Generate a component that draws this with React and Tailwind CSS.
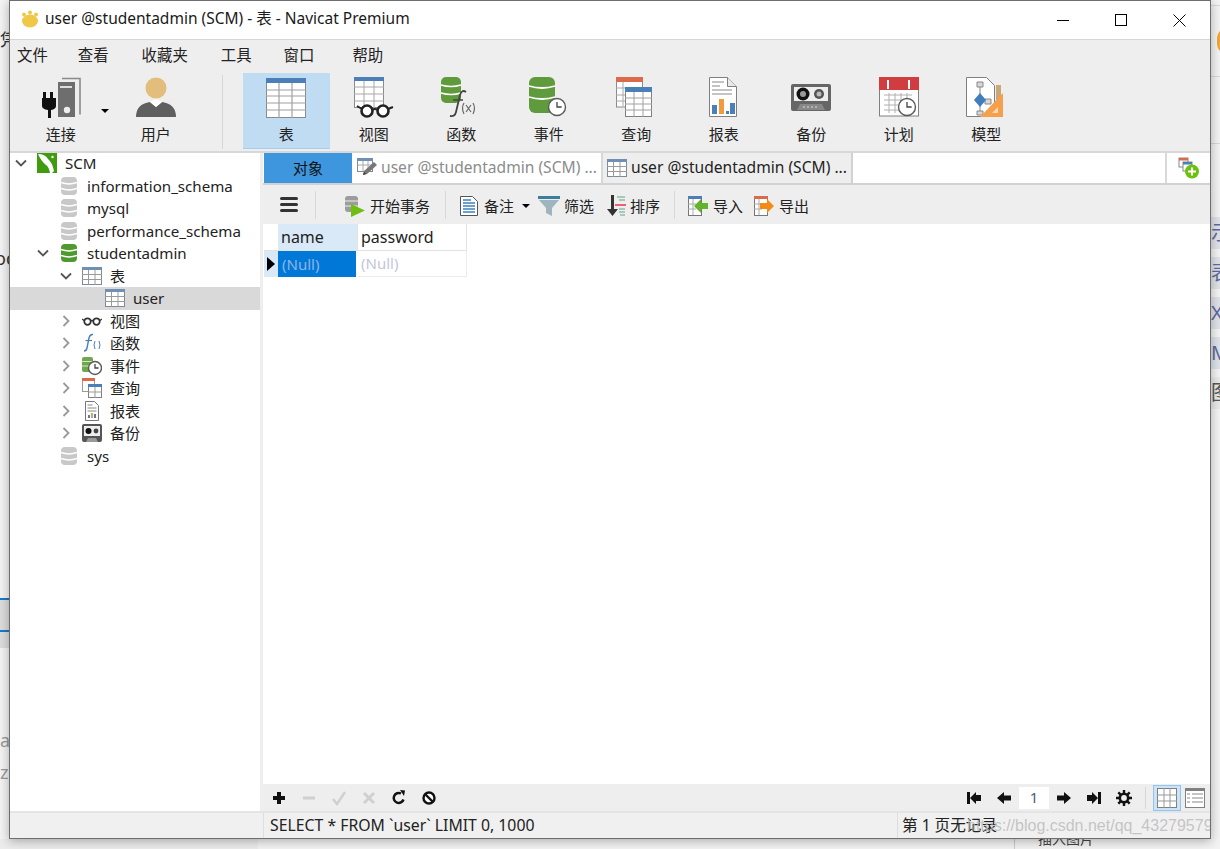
const cjk = "font-['Noto_Sans','Noto_Sans_CJK_SC',sans-serif]";

function TableIcon({ size = 40, head = "#4a7fb8", line = "#8a8a8a" }) {
  return (
    <svg width={size} height={size} viewBox="0 0 40 40">
      <rect x="0.5" y="0.5" width="39" height="39" fill="#fff" stroke={line} />
      <rect x="0" y="0" width="40" height="5" fill={head} />
      {[12, 18, 25, 32].map((y) => (
        <line key={y} x1="0" x2="40" y1={y} y2={y} stroke="#a0a0a0" strokeWidth="1.2" />
      ))}
      <line x1="13" x2="13" y1="5" y2="40" stroke="#a0a0a0" strokeWidth="1.2" />
      <line x1="26" x2="26" y1="5" y2="40" stroke="#a0a0a0" strokeWidth="1.2" />
    </svg>
  );
}

function SmallTable({ muted = "#6f8fb3" }) {
  return (
    <svg width="20" height="20" viewBox="0 0 20 20">
      <rect x="0.5" y="1.5" width="19" height="17" fill="#fff" stroke="#808a94" />
      <rect x="0" y="1" width="20" height="3" fill={muted} />
      <path d="M0 8.5h20M0 13.5h20M6.5 4v15M13 4v15" stroke="#9a9a9a" fill="none" />
    </svg>
  );
}

function Glasses({ w = 20, color = "#333" }) {
  return (
    <svg width={w} height={w * 0.5} viewBox="0 0 40 20">
      <circle cx="11" cy="11" r="6.5" fill="#fff" stroke={color} strokeWidth="3.5" />
      <circle cx="29" cy="11" r="6.5" fill="#fff" stroke={color} strokeWidth="3.5" />
      <path d="M17 10q3-2 6 0M4 9L0 6M36 9l4-3" stroke={color} strokeWidth="2.5" fill="none" />
    </svg>
  );
}

function Db({ w = 16, h = 20, color = "#c8c8c8" }) {
  return (
    <svg width={w} height={h} viewBox="0 0 16 20">
      <rect x="0" y="1" width="16" height="18" rx="4" fill={color} />
      <path d="M0 6.5q8 3 16 0M0 12.5q8 3 16 0" stroke="#fff" strokeWidth="1.4" fill="none" />
    </svg>
  );
}

function Clock({ cx, cy, r }) {
  return (
    <g>
      <circle cx={cx} cy={cy} r={r} fill="#fff" stroke="#5a5a5a" strokeWidth="1.4" />
      <path d={`M${cx} ${cy - r * 0.6}V${cy}H${cx + r * 0.55}`} stroke="#444" strokeWidth="1.3" fill="none" />
    </g>
  );
}

function ConnectIcon() {
  return (
    <svg width="42" height="42" viewBox="0 0 42 42">
      <path d="M22 1.500h18v36" stroke="#8a8a8a" strokeWidth="1.6" fill="none" />
      <rect x="18" y="5" width="17" height="35" fill="#6e6e6e" />
      <rect x="20" y="9" width="12" height="2" fill="#ddd" />
      <circle cx="27" cy="33" r="3.200" fill="#eee" />
      <path d="M3 15h3v6h4v-6h3v6h3v8q0 3-5 4v8H8v-8q-6-1-6-4v-8h1z" fill="#111" />
    </svg>
  );
}

function UserIcon() {
  return (
    <svg width="42" height="42" viewBox="0 0 42 42">
      <path d="M1 40q0-13 14-15l6 5 6-5q14 2 14 15z" fill="#5f5f5f" />
      <path d="M15 25l6 5 6-5-6-3z" fill="#fff" />
      <circle cx="21" cy="11" r="10.5" fill="#e3bd7c" />
    </svg>
  );
}

function ViewIcon() {
  return (
    <svg width="42" height="42" viewBox="0 0 42 42">
      <rect x="1.5" y="0.5" width="29" height="30" fill="#fff" stroke="#8a8a8a" />
      <rect x="1" y="0" width="30" height="4" fill="#4a7fb8" />
      <path d="M1 10h30M1 17h30M1 24h30M11 4v27M21 4v27" stroke="#a8a8a8" fill="none" />
      <g transform="translate(3 25)">
        <circle cx="11" cy="9" r="5.5" fill="#fff" stroke="#222" strokeWidth="2.6" />
        <circle cx="27" cy="9" r="5.5" fill="#fff" stroke="#222" strokeWidth="2.6" />
        <path d="M16 8q3-2 6 0M6 7L1 4M32 7l5-2" stroke="#222" strokeWidth="2" fill="none" />
      </g>
    </svg>
  );
}

function FuncIcon() {
  return (
    <svg width="42" height="42" viewBox="0 0 42 42">
      <rect x="1" y="0" width="20" height="26" rx="5" fill="#5f9b3c" />
      <path d="M1 8q10 3 20 0M1 16q10 3 20 0" stroke="#fff" strokeWidth="1.5" fill="none" />
      <path d="M26 15q-4-3-6 3l-4 17q-1 5-6 4" stroke="#444" strokeWidth="1.800" fill="none" />
      <path d="M13 23h10" stroke="#444" strokeWidth="1.500" />
      <path d="M24 26q-3 5 0 11M33 26q3 5 0 11M26 28l5 7M31 28l-5 7" stroke="#666" strokeWidth="1.200" fill="none" />
    </svg>
  );
}

function EventIcon() {
  return (
    <svg width="42" height="42" viewBox="0 0 42 42">
      <rect x="1" y="0" width="26" height="36" rx="6" fill="#5f9b3c" />
      <path d="M1 9q13 4 26 0M1 20q13 4 26 0" stroke="#fff" strokeWidth="1.8" fill="none" />
      <Clock cx={29} cy={30} r={8.5} />
    </svg>
  );
}

function QueryIcon() {
  return (
    <svg width="42" height="42" viewBox="0 0 42 42">
      <rect x="1.5" y="1" width="26" height="29" fill="#fff" stroke="#8a8a8a" />
      <rect x="1" y="0" width="27" height="5" fill="#dc6a4a" />
      <path d="M1 11h12M1 18h12M1 24h12M8 5v24" stroke="#a8a8a8" fill="none" />
      <rect x="10.5" y="10.5" width="26" height="29" fill="#fff" stroke="#808080" />
      <rect x="10" y="10" width="27" height="5" fill="#4a7fb8" />
      <path d="M10 21h27M10 27h27M10 33h27M19 15v25M28 15v25" stroke="#a0a0a0" fill="none" />
    </svg>
  );
}

function ReportIcon() {
  return (
    <svg width="42" height="42" viewBox="0 0 42 42">
      <path d="M6.5 0.5h18l9 9v30h-27z" fill="#fff" stroke="#808080" />
      <path d="M24.5 0.5v9h9" fill="#e8e8e8" stroke="#808080" />
      <path d="M9 5h12M9 9h8M9 13h20M9 17h20" stroke="#888" fill="none" />
      <rect x="9" y="28" width="5" height="9" fill="#4a7fb8" />
      <rect x="16" y="22" width="5" height="15" fill="#f29a3f" />
      <rect x="23" y="34" width="3" height="3" fill="#4a7fb8" />
      <rect x="27" y="26" width="5" height="11" fill="#4a7fb8" />
    </svg>
  );
}

function TapeIcon({ size = 42 }) {
  return (
    <svg width={size} height={size} viewBox="0 0 42 42">
      <rect x="1" y="7" width="40" height="27" rx="2" fill="#666" />
      <rect x="4" y="10" width="34" height="14" fill="#eee" />
      <circle cx="13" cy="17" r="6.5" fill="#111" />
      <circle cx="13" cy="17" r="3" fill="#999" />
      <circle cx="29" cy="17" r="5" fill="#555" />
      <circle cx="29" cy="17" r="2.5" fill="#bbb" />
      <path d="M7 33l3-6h22l3 6z" fill="#888" />
      <path d="M13 30h16" stroke="#ddd" strokeDasharray="2 2" />
    </svg>
  );
}

function PlanIcon() {
  return (
    <svg width="42" height="42" viewBox="0 0 42 42">
      <rect x="1.5" y="1" width="39" height="38" fill="#fff" stroke="#808080" />
      <rect x="1" y="0" width="40" height="13" fill="#d13c40" />
      <rect x="9" y="3" width="2" height="9" fill="#fff" />
      <rect x="30" y="3" width="2" height="9" fill="#fff" />
      <path d="M6 18h28M6 23h28M6 28h28M6 33h28M11 16v20M17 16v20M23 16v20M29 16v20" stroke="#b0b0b0" fill="none" />
      <Clock cx={29} cy={30} r={8.5} />
    </svg>
  );
}

function ModelIcon() {
  return (
    <svg width="42" height="42" viewBox="0 0 42 42">
      <path d="M1.5 0.5h20l8 8v31h-28z" fill="#fff" stroke="#808080" />
      <path d="M12 5h6v5h-6zM20 22h6v5h-6zM12 34h6v4h-6zM15 10v24" stroke="#888" fill="#d8d8d8" />
      <path d="M15 16l6 7-6 7-6-7z" fill="#3f7fc0" />
      <rect x="31" y="8" width="5" height="22" fill="#c9a777" />
      <path d="M38 16v24H15z" fill="#f5a04d" />
      <path d="M33 30v6h-6z" fill="#fff" opacity="0.6" />
    </svg>
  );
}

function ToolItem({ label, active, children }) {
  return (
    <div className={`w-[87.5px] h-[76px] flex flex-col items-center ${active ? "bg-[#bfdcf3] border-b border-[#a8cdea]" : ""}`}>
      <div className="h-[42px] mt-[4px] flex items-center justify-center">{children}</div>
      <div className="mt-[4px] text-[15px] leading-[22px] text-[#222]">{label}</div>
    </div>
  );
}

function Sep({ className = "" }) {
  return <div className={`w-px bg-[#d8d8d8] ${className}`} />;
}

function Chevron({ open, light }) {
  return (
    <svg width="16" height="16" viewBox="0 0 16 16">
      {open ? (
        <path d="M3 5.5l5 5 5-5" stroke="#555" strokeWidth="1.8" fill="none" />
      ) : (
        <path d="M5.5 3l5 5-5 5" stroke={light ? "#999" : "#555"} strokeWidth="1.8" fill="none" />
      )}
    </svg>
  );
}

function TreeRow({ pl, chevron, icon, text, selected }) {
  return (
    <div className={`h-[22.5px] flex items-center gap-2 ${pl} ${selected ? "bg-[#d9d9d9]" : ""}`}>
      <div className="w-4 h-4 shrink-0">
        {chevron ? <Chevron open={chevron === "open"} light={chevron === "closed"} /> : null}
      </div>
      <div className="w-5 h-5 shrink-0 flex items-center justify-center">{icon}</div>
      <span className="text-[15.1px] leading-[22px] text-[#222]">{text}</span>
    </div>
  );
}

function Dolphin() {
  return (
    <svg width="20" height="20" viewBox="0 0 20 20">
      <rect width="20" height="20" fill="#3f9c0f" />
      <path d="M1 1q7 0 10 5 4 3 6 12-1 1-2 2h-2q-1-6-4-8Q4 8 1 1z" fill="#fff" />
      <circle cx="15.5" cy="4" r="1.2" fill="#fff" />
    </svg>
  );
}

function SideIcon({ kind }) {
  if (kind === "func") {
    return (
      <svg width="20" height="20" viewBox="0 0 20 20">
        <path d="M11 1.5Q8 1 7 5L5 15q-.6 3-3 3" stroke="#4a7fb8" strokeWidth="1.4" fill="none" />
        <path d="M3.5 7.5H10" stroke="#4a7fb8" strokeWidth="1.2" />
        <path d="M13 8q-2 4 0 8M17 8q2 4 0 8" stroke="#4a7fb8" strokeWidth="1" fill="none" />
      </svg>
    );
  }
  if (kind === "event") {
    return (
      <svg width="20" height="20" viewBox="0 0 20 20">
        <rect x="0" y="1" width="11" height="15" rx="2" fill="#6ea84a" />
        <path d="M0 5.5h11M0 10h11" stroke="#d7e8c8" />
        <Clock cx={13} cy={12} r={6.5} />
      </svg>
    );
  }
  if (kind === "query") {
    return (
      <svg width="20" height="20" viewBox="0 0 20 20">
        <rect x="0.5" y="0.5" width="12" height="13" fill="#fff" stroke="#999" />
        <rect x="0" y="0" width="13" height="3" fill="#dc6a4a" />
        <rect x="6.5" y="6.5" width="13" height="13" fill="#fff" stroke="#808080" />
        <rect x="6" y="6" width="14" height="3" fill="#4a7fb8" />
        <path d="M6 14h14M13 9v11" stroke="#999" />
      </svg>
    );
  }
  if (kind === "report") {
    return (
      <svg width="20" height="20" viewBox="0 0 20 20">
        <path d="M3.5 .5h9l4 4v15h-13z" fill="#fff" stroke="#777" />
        <path d="M5.5 4h5M5.5 7h9M5.5 10h9" stroke="#888" />
        <rect x="6" y="14" width="2" height="3" fill="#4a7fb8" />
        <rect x="9" y="12" width="2" height="5" fill="#f29a3f" />
        <rect x="12" y="13" width="2" height="4" fill="#4a7fb8" />
      </svg>
    );
  }
  return (
    <svg width="20" height="20" viewBox="0 0 20 20">
      <rect x="0" y="1" width="20" height="18" rx="2" fill="#555" />
      <rect x="2" y="3" width="16" height="10" fill="#eee" />
      <circle cx="6.5" cy="8" r="3" fill="#111" />
      <circle cx="14" cy="8" r="2.4" fill="#444" />
      <path d="M4 19l2-4h8l2 4z" fill="#999" />
    </svg>
  );
}

function GridHeadCell({ w, bg, children }) {
  return (
    <div className={`${w} h-[27px] pl-[3px] flex items-center text-[16px] text-[#222] border-r border-b border-[#e2e2e2] ${bg}`}>
      {children}
    </div>
  );
}

function NavIcon({ d }) {
  return (
    <svg width="16" height="16" viewBox="0 0 16 16">
      <path d={d} fill="#111" />
    </svg>
  );
}

function SmallAction({ children, label }) {
  return (
    <button type="button" aria-label={label} className="w-[30px] h-5 flex items-center justify-center">
      {children}
    </button>
  );
}

const toolbarText = "text-[15px] leading-[22px] text-[#222]";

export default function App() {
  return (
    <div className={`relative w-[1220px] h-[849px] overflow-hidden bg-[#f3f3f3] ${cjk}`}>
      {/* what shows of the page behind the window */}
      <div className="absolute left-0 top-[30px] text-[17px] leading-[20px] text-[#333]">凭</div>
      <div className="absolute left-[-5px] top-[248px] text-[18px] leading-[20px] text-[#333]">od</div>
      <div className="absolute left-0 top-[598px] w-[10px] h-[50px] border-t-2 border-[#1a78c9] bg-[#dcdcdc]" />
      <div className="absolute left-0 top-[630px] w-[10px] h-[2px] bg-[#1a78c9]" />
      <div className="absolute left-0 top-[728px] text-[18px] leading-[24px] text-[#999]">a</div>
      <div className="absolute left-0 top-[760px] text-[18px] leading-[24px] text-[#999]">z</div>
      <div className="absolute left-0 top-[839px] w-[258px] h-[10px] bg-[#ececec]" />
      <div className="absolute left-[1014px] top-[839px] w-px h-[10px] bg-[#ccc]" />
      <div className="absolute left-[1038px] top-[829px] text-[14px] leading-[20px] text-[#444]">插入图片</div>
      <div className="absolute left-[1217px] top-[28px] w-[20px] h-[26px] rounded-full bg-[#f0a63a]" />
      <div className="absolute left-[1211px] top-[5px] w-[9px] h-px bg-[#d8d8d8]" />
      <div className="absolute left-[1211px] top-[76px] w-[9px] h-px bg-[#d8d8d8]" />
      <div className="absolute left-[1211px] top-[143px] w-[9px] h-px bg-[#d8d8d8]" />
      <div className="absolute left-[1211px] top-[217px] w-[9px] flex flex-col overflow-hidden text-[20px] leading-[32px] text-[#5f6a9c]">
        <span className="block w-[24px] h-[32px] mb-[8px] bg-[#dfe2e8]">示</span>
        <span className="block w-[24px] h-[32px] mb-[8px] bg-[#dfe2e8]">表</span>
        <span className="block w-[24px] h-[32px] mb-[8px] bg-[#dfe2e8]">X</span>
        <span className="block w-[24px] h-[32px] mb-[8px] bg-[#dfe2e8]">M</span>
        <span className="block w-[24px] h-[32px] bg-[#e9e9e9] text-[#555]">图</span>
      </div>

      <div className="relative ml-[9px] w-[1202px] h-[839px] border border-[#6e6e6e] bg-white flex flex-col shadow-[0_2px_10px_rgba(0,0,0,0.3)]">
        {/* title bar */}
        <div className="h-[39px] shrink-0 flex items-center border-b border-[#d6d6d6] bg-white">
          <svg className="ml-[11px] mb-[3px]" width="18" height="18" viewBox="0 0 18 18">
            <ellipse cx="9" cy="11" rx="8" ry="6.5" fill="#eec846" />
            <circle cx="3" cy="4.5" r="2" fill="#eec846" />
            <circle cx="9" cy="2.5" r="2" fill="#eec846" />
            <circle cx="15" cy="4.5" r="2" fill="#eec846" />
          </svg>
          <span className="ml-[6px] mb-[2px] text-[15.5px] text-[#1a1a1a]">user @studentadmin (SCM) - 表 - Navicat Premium</span>
          <div className="ml-auto flex items-center">
            <div className="w-[58px] h-[38px] flex items-center justify-center">
              <div className="w-[12px] h-px bg-black" />
            </div>
            <div className="w-[58px] h-[38px] flex items-center justify-center">
              <div className="w-[12px] h-[12px] border border-black" />
            </div>
            <div className="w-[58px] h-[38px] flex items-center justify-center mr-[2px]">
              <svg width="13" height="13" viewBox="0 0 13 13">
                <path d="M.5.5l12 12M12.5.5l-12 12" stroke="#000" />
              </svg>
            </div>
          </div>
        </div>

        {/* menu */}
        <div className="h-[33px] shrink-0 bg-[#eeeeee] flex items-center pl-[7px] text-[15.4px] text-[#222] pb-[1px]">
          <span>文件</span>
          <span className="ml-[30px]">查看</span>
          <span className="ml-[33px]">收藏夹</span>
          <span className="ml-[33px]">工具</span>
          <span className="ml-[32px]">窗口</span>
          <span className="ml-[38px]">帮助</span>
        </div>

        {/* main toolbar */}
        <div className="h-[80px] shrink-0 bg-[#eeeeee] flex items-start pl-[7px] border-b-2 border-[#d8d8d8]">
          <div className="relative w-[95px]">
            <div className="w-[87.5px]">
              <ToolItem label="连接">
                <ConnectIcon />
              </ToolItem>
            </div>
            <div className="absolute left-[84px] top-[36px] w-0 h-0 border-x-[4px] border-x-transparent border-t-[4px] border-t-black" />
          </div>
          <ToolItem label="用户">
            <UserIcon />
          </ToolItem>
          <Sep className="ml-[22px] mt-[2px] h-[74px]" />
          <div className="ml-[20px] flex">
            <ToolItem label="表" active>
              <TableIcon />
            </ToolItem>
            <ToolItem label="视图">
              <ViewIcon />
            </ToolItem>
            <ToolItem label="函数">
              <FuncIcon />
            </ToolItem>
            <ToolItem label="事件">
              <EventIcon />
            </ToolItem>
            <ToolItem label="查询">
              <QueryIcon />
            </ToolItem>
            <ToolItem label="报表">
              <ReportIcon />
            </ToolItem>
            <ToolItem label="备份">
              <TapeIcon />
            </ToolItem>
            <ToolItem label="计划">
              <PlanIcon />
            </ToolItem>
            <ToolItem label="模型">
              <ModelIcon />
            </ToolItem>
          </div>
        </div>

        {/* body */}
        <div className="flex-1 min-h-0 flex">
          <div className="w-[250px] shrink-0 bg-white">
            <div className="-mt-px">
              <TreeRow pl="pl-[3px]" chevron="open" icon={<Dolphin />} text="SCM" />
              <TreeRow pl="pl-[25px]" icon={<Db />} text="information_schema" />
              <TreeRow pl="pl-[25px]" icon={<Db />} text="mysql" />
              <TreeRow pl="pl-[25px]" icon={<Db />} text="performance_schema" />
              <TreeRow pl="pl-[25px]" chevron="open" icon={<Db color="#4f9a2e" />} text="studentadmin" />
              <TreeRow pl="pl-[48px]" chevron="open" icon={<SmallTable />} text="表" />
              <TreeRow pl="pl-[71px]" icon={<SmallTable />} text="user" selected />
              <TreeRow pl="pl-[48px]" chevron="closed" icon={<Glasses />} text="视图" />
              <TreeRow pl="pl-[48px]" chevron="closed" icon={<SideIcon kind="func" />} text="函数" />
              <TreeRow pl="pl-[48px]" chevron="closed" icon={<SideIcon kind="event" />} text="事件" />
              <TreeRow pl="pl-[48px]" chevron="closed" icon={<SideIcon kind="query" />} text="查询" />
              <TreeRow pl="pl-[48px]" chevron="closed" icon={<SideIcon kind="report" />} text="报表" />
              <TreeRow pl="pl-[48px]" chevron="closed" icon={<SideIcon kind="tape" />} text="备份" />
              <TreeRow pl="pl-[25px]" icon={<Db />} text="sys" />
            </div>
          </div>

          <div className="w-[3px] shrink-0 bg-[#eeeeee]" />

          <div className="flex-1 min-w-0 flex flex-col">
            {/* tabs */}
            <div className="h-[32px] shrink-0 flex border-b-2 border-[#d2d2d2] text-[15.6px]">
              <div className="ml-px w-[88px] bg-[#3d96de] flex items-center justify-center text-[15px] text-[#111]">对象</div>
              <div className="ml-px w-[250px] bg-white flex items-center pl-[4px] border-r-2 border-[#d8d8d8]">
                <svg width="22" height="22" viewBox="0 0 22 22">
                  <rect x="0.5" y="1.5" width="15" height="13" fill="#fff" stroke="#808a94" />
                  <rect x="0" y="1" width="16" height="3" fill="#6f8fb3" />
                  <path d="M1 8h14M6 4v10M11 4v10" stroke="#aaa" />
                  <path d="M6 18l1-4L17 5l3 3L10 17z" fill="#777" />
                  <path d="M6 18l1-3 2 2z" fill="#333" />
                </svg>
                <span className="ml-[2px] text-[#8c8c8c] whitespace-nowrap">user @studentadmin (SCM) ...</span>
              </div>
              <div className="w-[250px] bg-[#eeeeee] flex items-center pl-[4px] border-r-2 border-[#d2d2d2]">
                <SmallTable />
                <span className="ml-[4px] text-[#222] whitespace-nowrap">user @studentadmin (SCM) ...</span>
              </div>
              <div className="flex-1 bg-white border-r-2 border-[#d8d8d8]" />
              <div className="w-[43px] bg-white flex items-center justify-center">
                <svg width="22" height="22" viewBox="0 0 22 22">
                  <rect x="1" y="1" width="9" height="9" fill="#fff" stroke="#888" />
                  <rect x="1" y="1" width="9" height="2.5" fill="#dc6a4a" />
                  <rect x="5" y="5" width="9" height="9" fill="#fff" stroke="#888" />
                  <rect x="5" y="5" width="9" height="2.5" fill="#4a7fb8" />
                  <circle cx="14" cy="14.5" r="7" fill="#6cc00e" />
                  <path d="M10 14.5h8M14 10.5v8" stroke="#fff" strokeWidth="2" />
                </svg>
              </div>
            </div>

            {/* object toolbar */}
            <div className={`h-[39px] shrink-0 bg-[#eeeeee] flex items-center pt-[2px] ${toolbarText}`}>
              <div className="ml-[17px] mb-[2px] w-[18px] flex flex-col gap-[3px]">
                <div className="h-[3px] rounded-sm bg-[#333]" />
                <div className="h-[3px] rounded-sm bg-[#333]" />
                <div className="h-[3px] rounded-sm bg-[#333]" />
              </div>
              <Sep className="ml-[17px] mb-[2px] h-[28px]" />
              <svg className="ml-[28px]" width="22" height="22" viewBox="0 0 22 22">
                <rect x="1" y="1" width="13" height="16" rx="3" fill="#9c9c9c" />
                <path d="M1 6h13M1 11h13" stroke="#eee" />
                <path d="M7 9l14 6.500L7 22z" fill="#6fbe12" />
              </svg>
              <span className="ml-[4px]">开始事务</span>
              <Sep className="ml-[15px] mb-[2px] h-[28px]" />
              <svg className="ml-[14px]" width="18" height="22" viewBox="0 0 18 22">
                <path d="M.5 1.500h12l5 5v14H.5z" fill="#fff" stroke="#555" />
                <path d="M3 5h8M3 8h12M3 11h12M3 14h12M3 17h12" stroke="#3b83bd" strokeWidth="1.300" />
              </svg>
              <span className="ml-[6px]">备注</span>
              <div className="ml-[8px] w-0 h-0 border-x-[4px] border-x-transparent border-t-[4px] border-t-black" />
              <svg className="ml-[8px]" width="22" height="22" viewBox="0 0 22 22">
                <path d="M0 1h22v3H0z" fill="#3c7f9c" />
                <path d="M1 5h20l-7 8v8l-6-3v-5z" fill="#9fb4bf" />
              </svg>
              <span className="ml-[4px]">筛选</span>
              <svg className="ml-[12px]" width="20" height="22" viewBox="0 0 20 22">
                <path d="M5 0h3v14h4l-5.500 7L1 14h4z" fill="#333" />
                <path d="M11 2h8M13 5h6M13 14h6M13 17h6M14 20h5" stroke="#8fbfa5" strokeWidth="1.400" />
                <path d="M9 10h11" stroke="#e8233f" strokeWidth="1.400" />
              </svg>
              <span className="ml-[4px]">排序</span>
              <Sep className="ml-[14px] mb-[2px] h-[28px]" />
              <svg className="ml-[13px]" width="20" height="22" viewBox="0 0 20 22">
                <rect x=".5" y="1.500" width="13" height="19" fill="#fff" stroke="#777" />
                <rect x="0" y="1" width="14" height="3" fill="#4a7fb8" />
                <path d="M0 9h8M0 14h8M5 4v16" stroke="#aaa" />
                <path d="M6 11l7-7v4h7v6h-7v4z" fill="#62b52a" />
              </svg>
              <span className="ml-[5px]">导入</span>
              <svg className="ml-[11px]" width="20" height="22" viewBox="0 0 20 22">
                <rect x=".5" y="1.500" width="13" height="19" fill="#fff" stroke="#777" />
                <rect x="0" y="1" width="14" height="3" fill="#dc6a4a" />
                <path d="M0 9h8M0 14h8M5 4v16" stroke="#aaa" />
                <path d="M20 11l-7-7v4H6v6h7v4z" fill="#f58a16" />
              </svg>
              <span className="ml-[5px]">导出</span>
            </div>

            {/* data grid */}
            <div className="flex-1 min-h-0 bg-white">
              <div className="flex">
                <div className="ml-px w-[14px] h-[27px] border-b border-[#e2e2e2]" />
                <GridHeadCell w="w-[80px]" bg="bg-[#d9e9f7]">name</GridHeadCell>
                <GridHeadCell w="w-[109px]" bg="bg-white">password</GridHeadCell>
              </div>
              <div className="flex">
                <div className="ml-px w-[14px] h-[26px] bg-[#d9e9f7] flex items-center justify-center">
                  <div className="w-0 h-0 border-y-[7px] border-y-transparent border-l-[8px] border-l-black" />
                </div>
                <div className="w-[78px] h-[26px] pl-[4px] bg-[#0078d7] text-[#8fb4e6] text-[15px] flex items-center">(Null)</div>
                <div className="ml-[2px] w-[109px] h-[26px] pl-[3px] text-[#c3c6da] text-[15px] flex items-center border-r border-b border-[#ececec]">(Null)</div>
              </div>
            </div>

            {/* grid footer */}
            <div className="h-[27px] shrink-0 bg-[#eeeeee] flex items-center pl-[1px]">
              <SmallAction label="add">
                <NavIcon d="M6 2h4v4h4v4h-4v4H6v-4H2V6h4z" />
              </SmallAction>
              <SmallAction label="remove">
                <svg width="16" height="16" viewBox="0 0 16 16"><path d="M2 6.500h12v3H2z" fill="#d0d0d0" /></svg>
              </SmallAction>
              <SmallAction label="apply">
                <svg width="16" height="16" viewBox="0 0 16 16"><path d="M2 9l4 5 8-12" stroke="#d0d0d0" strokeWidth="2.500" fill="none" /></svg>
              </SmallAction>
              <SmallAction label="discard">
                <svg width="16" height="16" viewBox="0 0 16 16"><path d="M3 3l10 10M13 3L3 13" stroke="#d0d0d0" strokeWidth="3" /></svg>
              </SmallAction>
              <SmallAction label="refresh">
                <svg width="16" height="16" viewBox="0 0 16 16">
                  <path d="M12.500 9.500A5 5 0 1 1 10 3.500" stroke="#111" strokeWidth="2.500" fill="none" />
                  <path d="M9 0l5 .5L13 6z" fill="#111" />
                </svg>
              </SmallAction>
              <SmallAction label="stop">
                <svg width="16" height="16" viewBox="0 0 16 16">
                  <circle cx="8" cy="8" r="5.500" stroke="#111" strokeWidth="2.400" fill="#fff" />
                  <path d="M4 4l8 8" stroke="#111" strokeWidth="2.400" />
                </svg>
              </SmallAction>

              <div className="ml-auto flex items-center">
                <NavIcon d="M1 2h3v12H1zM4 8l6-6v3h5v6h-5v3z" />
                <div className="w-[14px]" />
                <NavIcon d="M1 8l7-6v3.500h7v5H8V14z" />
                <div className="ml-[7px] w-[30px] h-[22px] bg-white flex items-center justify-center text-[15px] text-[#4a5f7a]">1</div>
                <div className="w-[7px]" />
                <NavIcon d="M15 8L8 2v3.500H1v5h7V14z" />
                <div className="w-[14px]" />
                <NavIcon d="M15 2h-3v12h3zM12 8L6 2v3H1v6h5v3z" />
                <div className="w-[14px]" />
                <svg width="16" height="16" viewBox="0 0 16 16">
                  <circle cx="8" cy="8" r="4.200" stroke="#111" strokeWidth="2.600" fill="none" />
                  <path d="M8 0v3M8 13v3M0 8h3M13 8h3M2.300 2.300l2.100 2.100M11.600 11.600l2.100 2.100M13.700 2.300l-2.100 2.100M4.400 11.600l-2.100 2.100" stroke="#111" strokeWidth="2.400" />
                </svg>
                <Sep className="ml-[13px] h-[22px]" />
                <div className="ml-[7px] w-[28px] h-[26px] bg-[#cde4f8] border border-[#90c5f2] flex items-center justify-center">
                  <svg width="20" height="20" viewBox="0 0 20 20">
                    <rect x=".5" y=".5" width="19" height="19" fill="#fff" stroke="#808080" />
                    <path d="M0 7h20M0 13h20M7 0v20M13 0v20" stroke="#999" />
                  </svg>
                </div>
                <svg className="ml-[4px] mr-[5px]" width="20" height="20" viewBox="0 0 20 20">
                  <rect x=".5" y=".5" width="19" height="19" fill="#fff" stroke="#808080" />
                  <rect x="0" y="0" width="20" height="3" fill="#808080" />
                  <path d="M2 6h3M2 10h3M2 14h3M7 6h11M7 10h11M7 14h11" stroke="#888" />
                </svg>
              </div>
            </div>
          </div>
        </div>

        {/* status bar */}
        <div className="relative h-[27px] shrink-0 bg-[#f0f0f0] border-t-2 border-[#e4e4e4] flex items-center overflow-hidden text-[15.8px] text-[#222]">
          <div className="ml-[253px] w-px h-full bg-[#dedede]" />
          <span className="ml-[6px]">SELECT * FROM `user` LIMIT 0, 1000</span>
          <div className="absolute left-[887px] top-0 w-px h-full bg-[#dedede]" />
          <span className="absolute left-[892px] text-[15.6px]">第 1 页无记录</span>
          <span className="absolute left-[957px] top-[1px] font-['Liberation_Sans',sans-serif] text-[16px] text-[#b8b8b8]/80 whitespace-nowrap">https://blog.csdn.net/qq_43279579</span>
        </div>
      </div>
    </div>
  );
}
